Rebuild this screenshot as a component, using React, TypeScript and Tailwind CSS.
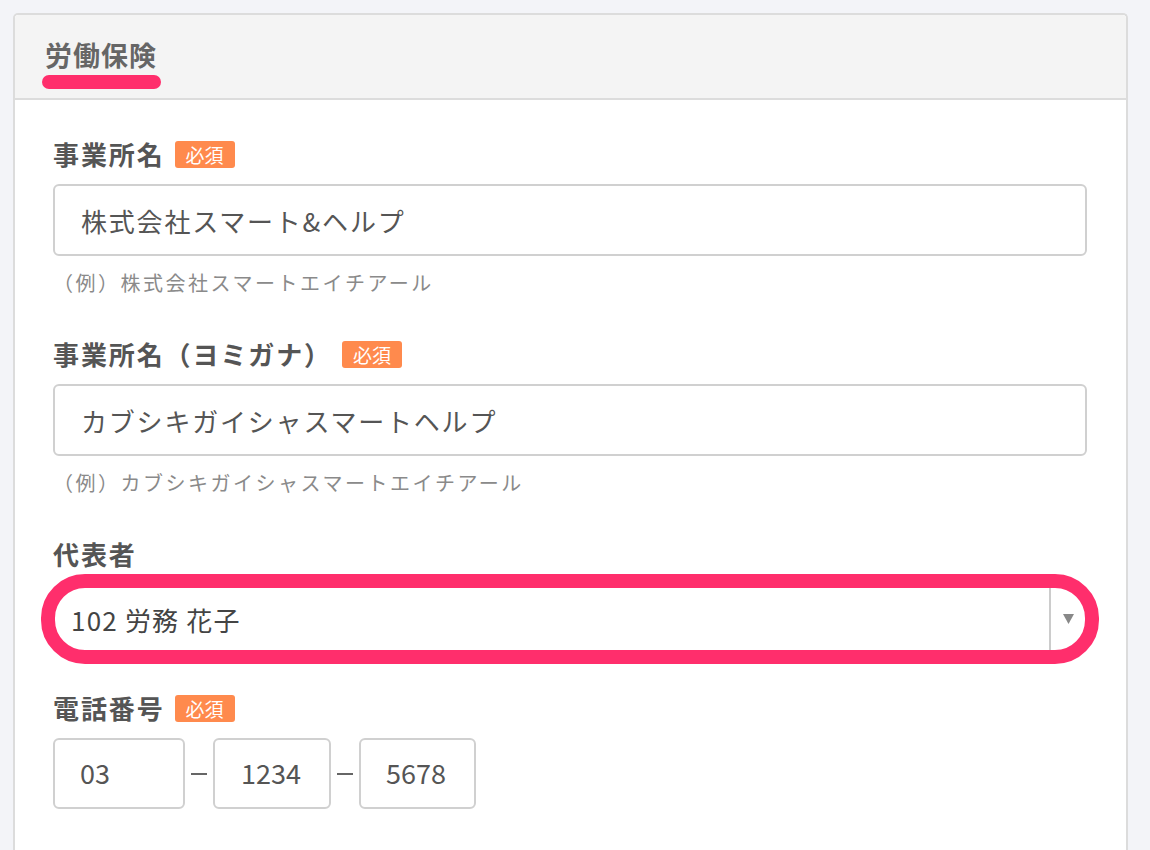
import React from "react";

const font = { fontFamily: '"Noto Sans CJK JP", "Noto Sans", sans-serif' };

function Badge() {
  return (
    <span className="ml-[10px] inline-flex h-[27px] w-[60px] items-center justify-center rounded-[3px] bg-[#ff8a4d] text-[19px] leading-none text-white">
      必須
    </span>
  );
}

function Label({ text, required }: { text: string; required?: boolean }) {
  return (
    <div className="flex h-[28px] items-center">
      <span className="text-[26px] font-bold leading-none tracking-[1.9px] text-[#555]">{text}</span>
      {required && <Badge />}
    </div>
  );
}

function TextInput({ value }: { value: string }) {
  return (
    <div className="mt-[16px] flex h-[72px] items-center rounded-[6px] border-2 border-[#d0d0d0] bg-white pl-[26px] text-[26px] tracking-[1.8px] text-[#555]">
      {value}
    </div>
  );
}

function Helper({ text }: { text: string }) {
  return <div className="mt-[12px] h-[30px] text-[20px] leading-[30px] tracking-[2.5px] text-[#8a8a8a]">{text}</div>;
}

export default function App() {
  return (
    <div className="min-h-[850px] w-[1150px] bg-[#f3f4f8] pl-[13px] pt-[13px]" style={font}>
      <div className="h-[837px] w-[1115px] rounded-t-[5px] border-2 border-b-0 border-[#dcdcdc] bg-white">
        <div className="h-[85px] rounded-t-[4px] border-b-2 border-[#dcdcdc] bg-[#f4f4f4] pl-[26px] pt-[24px]">
          <div className="inline-flex flex-col items-center">
            <span className="px-[4px] text-[27px] font-bold leading-[32px] tracking-[1px] text-[#666]">労働保険</span>
            <span className="mt-[4px] h-[14px] w-[119px] rounded-full bg-[#ff2e6c]"></span>
          </div>
        </div>
        <div className="px-[38px] pr-[39px] pt-[40px]">
          <Label text="事業所名" required />
          <TextInput value="株式会社スマート&ヘルプ" />
          <Helper text="（例）株式会社スマートエイチアール" />

          <div className="mt-[42px]">
            <Label text="事業所名（ヨミガナ）" required />
          </div>
          <TextInput value="カブシキガイシャスマートヘルプ" />
          <Helper text="（例）カブシキガイシャスマートエイチアール" />

          <div className="mt-[42px]">
            <Label text="代表者" />
          </div>
          <div className="relative mt-[18px]">
            <div className="flex h-[66px] items-stretch rounded-[6px] border-2 border-[#d0d0d0] bg-white">
              <div className="flex flex-1 items-center pl-[16px] text-[26px] tracking-[1.2px] text-[#444]">102 労務 花子</div>
              <div className="flex w-[36px] items-center justify-center border-l-2 border-[#cccccc]">
                <svg width="11" height="10" viewBox="0 0 11 10">
                  <path d="M0 0 L11 0 L5.5 10 Z" fill="#888" />
                </svg>
              </div>
            </div>
            <div className="pointer-events-none absolute -inset-[12px] rounded-[44px] border-[14px] border-[#ff2e6c]"></div>
          </div>

          <div className="mt-[42px]">
            <Label text="電話番号" required />
          </div>
          <div className="mt-[16px] flex items-center">
            <div className="flex h-[71px] w-[132px] items-center rounded-[6px] border-2 border-[#d0d0d0] pl-[25px] text-[27px] text-[#555]">03</div>
            <div className="mx-[6px] h-[2px] w-[16px] bg-[#666]"></div>
            <div className="flex h-[71px] w-[118px] items-center rounded-[6px] border-2 border-[#d0d0d0] pl-[26px] text-[27px] text-[#555]">1234</div>
            <div className="mx-[6px] h-[2px] w-[16px] bg-[#666]"></div>
            <div className="flex h-[71px] w-[117px] items-center rounded-[6px] border-2 border-[#d0d0d0] pl-[25px] text-[27px] text-[#555]">5678</div>
          </div>
        </div>
      </div>
    </div>
  );
}
